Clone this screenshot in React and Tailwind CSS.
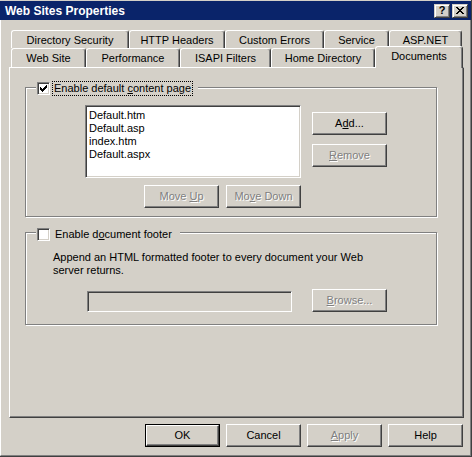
import React from 'react';

// classic Win2000 3D edges
const raised = 'border border-t-white border-l-white border-r-[#404040] border-b-[#404040] shadow-[inset_-1px_-1px_0_#808080]';
const sunken = 'border border-t-[#808080] border-l-[#808080] border-r-white border-b-white shadow-[inset_1px_1px_0_#404040,inset_-1px_-1px_0_#D4D0C8]';
const greyText = 'text-[#808080] [text-shadow:1px_1px_0_#fff]';

const Button = ({ children, disabled = false, isDefault = false, className = '' }) => (
  <div className={`h-[23px] w-[75px] shrink-0 ${isDefault ? 'border border-black' : ''} ${className}`}>
    <div className={`flex h-full w-full items-center justify-center ${raised} ${disabled ? greyText : 'text-black'}`}>
      <span className="whitespace-pre">{children}</span>
    </div>
  </div>
);

const CheckMark = () => (
  <svg width="7" height="7" viewBox="0 0 7 7" shapeRendering="crispEdges" fill="#000">
    <rect x="6" y="0" width="1" height="1" />
    <rect x="5" y="1" width="2" height="1" />
    <rect x="0" y="2" width="1" height="1" />
    <rect x="4" y="2" width="3" height="1" />
    <rect x="0" y="3" width="2" height="1" />
    <rect x="3" y="3" width="3" height="1" />
    <rect x="0" y="4" width="5" height="1" />
    <rect x="1" y="5" width="3" height="1" />
    <rect x="2" y="6" width="1" height="1" />
  </svg>
);

const Checkbox = ({ checked }) => (
  <div className={`flex h-[13px] w-[13px] shrink-0 items-center justify-center bg-white ${sunken}`}>
    {checked && <CheckMark />}
  </div>
);

const CloseGlyph = () => (
  <svg width="8" height="7" viewBox="0 0 8 7" shapeRendering="crispEdges" fill="#000">
    <rect x="0" y="0" width="2" height="1" />
    <rect x="6" y="0" width="2" height="1" />
    <rect x="1" y="1" width="2" height="1" />
    <rect x="5" y="1" width="2" height="1" />
    <rect x="2" y="2" width="4" height="1" />
    <rect x="3" y="3" width="2" height="1" />
    <rect x="2" y="4" width="4" height="1" />
    <rect x="1" y="5" width="2" height="1" />
    <rect x="5" y="5" width="2" height="1" />
    <rect x="0" y="6" width="2" height="1" />
    <rect x="6" y="6" width="2" height="1" />
  </svg>
);

const CaptionButton = ({ children }) => (
  <div className="flex h-[14px] w-[16px] items-center justify-center border border-t-[#D4D0C8] border-l-[#D4D0C8] border-r-[#404040] border-b-[#404040] bg-[#D4D0C8] shadow-[inset_1px_1px_0_#fff,inset_-1px_-1px_0_#808080]">
    {children}
  </div>
);

const tabBase = 'shrink-0 whitespace-nowrap border-t border-l border-r border-t-white border-l-white border-r-[#404040] rounded-t-[3px] shadow-[inset_-1px_0_0_#808080] bg-[#D4D0C8] pt-[3px] text-center';

const backRow = [
  ['Directory Security', 'w-[118px]'],
  ['HTTP Headers', 'w-[96px]'],
  ['Custom Errors', 'w-[99px]'],
  ['Service', 'w-[65px]'],
  ['ASP.NET', 'w-[73px]'],
];

const frontRow = [
  ['Web Site', 'w-[75px]'],
  ['Performance', 'w-[94px]'],
  ['ISAPI Filters', 'w-[91px]'],
  ['Home Directory', 'w-[104px]'],
];

const groupBox = 'relative ml-[15px] w-[412px] border border-[#808080] shadow-[inset_1px_1px_0_#fff,1px_1px_0_#fff]';

export default function App() {
  return (
    <div className="flex h-[457px] w-[472px] flex-col overflow-hidden border-r border-b border-[#404040] bg-[#D4D0C8] font-['Liberation_Sans',Arial,sans-serif] text-[11px] leading-[13px] text-black select-none">
      {/* title bar */}
      <div className="mt-[1px] flex h-[19px] shrink-0 items-center justify-between bg-[#0A246A] pl-[5px] pr-[3px]">
        <span className="text-[12px] font-bold leading-[14px] text-white">Web Sites Properties</span>
        <div className="flex gap-[2px]">
          <CaptionButton>
            <span className="text-[11px] font-bold leading-[11px] text-black">?</span>
          </CaptionButton>
          <CaptionButton>
            <CloseGlyph />
          </CaptionButton>
        </div>
      </div>

      {/* client area */}
      <div className="flex flex-1 flex-col border-l border-r border-b border-l-white border-r-[#808080] border-b-[#808080]">
        <div className="ml-[8px] w-[455px] pt-[10px]">
          <div className="ml-[2px] flex h-[18px]">
            {backRow.map(([label, w]) => (
              <div key={label} className={`${tabBase} ${w} h-[18px]`}>{label}</div>
            ))}
          </div>
          <div className="ml-[2px] flex h-[19px] items-start">
            {frontRow.map(([label, w]) => (
              <div key={label} className={`${tabBase} ${w} h-[19px]`}>{label}</div>
            ))}
            <div className={`${tabBase} relative z-10 -mt-[2px] h-[22px] w-[88px]`}>Documents</div>
          </div>

          {/* tab page */}
          <div className="relative h-[351px] border border-t-white border-l-white border-r-[#404040] border-b-[#404040] shadow-[inset_-1px_-1px_0_#808080]">
            {/* default content page */}
            <div className={`${groupBox} mt-[19px] h-[130px]`}>
              <div className="absolute left-[10px] top-[-7px] flex items-center bg-[#D4D0C8] pl-[1px] pr-[5px]">
                <Checkbox checked />
                <span className="ml-[2px] border border-dotted border-black pl-[1px] pr-[1px]">
                  Enable default <u>c</u>ontent page
                </span>
              </div>

              <div className="ml-[59px] mt-[17px] flex">
                <div className={`h-[73px] w-[216px] bg-white pl-[3px] pt-[3px] ${sunken}`}>
                  <div>Default.htm</div>
                  <div>Default.asp</div>
                  <div>index.htm</div>
                  <div>Default.aspx</div>
                </div>
                <div className="ml-[11px] flex flex-col gap-[9px] pt-[7px]">
                  <Button>A<u>d</u>d...</Button>
                  <Button disabled><u>R</u>emove</Button>
                </div>
              </div>

              <div className="ml-[118px] mt-[7px] flex gap-[7px]">
                <Button disabled>Move <u>U</u>p</Button>
                <Button disabled>Mo<u>v</u>e Down</Button>
              </div>
            </div>

            {/* document footer */}
            <div className={`${groupBox} mt-[15px] h-[93px]`}>
              <div className="absolute left-[10px] top-[-6px] flex items-center bg-[#D4D0C8] pl-[1px] pr-[7px]">
                <Checkbox />
                <span className="ml-[2px] border border-transparent pl-[2px]">
                  Enable d<u>o</u>cument footer
                </span>
              </div>

              <p className="ml-[27px] mt-[18px]">
                Append an HTML formatted footer to every document your Web
                <br />
                server returns.
              </p>

              <div className="ml-[61px] mt-[12px] flex items-start">
                <div className={`mt-[2px] h-[21px] w-[205px] bg-[#D4D0C8] ${sunken}`} />
                <Button disabled className="ml-[20px]"><u>B</u>rowse...</Button>
              </div>
            </div>
          </div>
        </div>

        {/* dialog buttons */}
        <div className="ml-[144px] mt-[6px] flex gap-[6px]">
          <Button isDefault>OK</Button>
          <Button>Cancel</Button>
          <Button disabled><u>A</u>pply</Button>
          <Button>Help</Button>
        </div>
      </div>
    </div>
  );
}
